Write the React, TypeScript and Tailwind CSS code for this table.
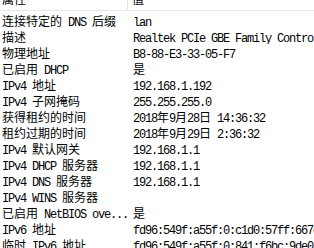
import React from "react";

const rows: [string, string][] = [
  ["连接特定的 DNS 后缀", "lan"],
  ["描述", "Realtek PCIe GBE Family Controller"],
  ["物理地址", "B8-88-E3-33-05-F7"],
  ["已启用 DHCP", "是"],
  ["IPv4 地址", "192.168.1.192"],
  ["IPv4 子网掩码", "255.255.255.0"],
  ["获得租约的时间", "2018年9月28日 14:36:32"],
  ["租约过期的时间", "2018年9月29日 2:36:32"],
  ["IPv4 默认网关", "192.168.1.1"],
  ["IPv4 DHCP 服务器", "192.168.1.1"],
  ["IPv4 DNS 服务器", "192.168.1.1"],
  ["IPv4 WINS 服务器", ""],
  ["已启用 NetBIOS ove...", "是"],
  ["IPv6 地址", "fd96:549f:a55f:0:c1d0:57ff:667c:4a12"],
  ["临时 IPv6 地址", "fd96:549f:a55f:0:841:f6bc:9de0:1b7a"],
];

function Mixed({ text }: { text: string }) {
  const parts = text.split(/([\x00-\x7f]+)/).filter((p) => p.length > 0);
  return (
    <>
      {parts.map((p, i) =>
        /^[\x00-\x7f]+$/.test(p) ? (
          <span
            key={i}
            className="font-['Liberation_Mono',monospace] text-[12px] tracking-[-1.2px] whitespace-pre"
          >
            {p}
          </span>
        ) : (
          <span
            key={i}
            className="font-['Noto_Sans_CJK_SC',sans-serif] text-[12px] whitespace-pre"
          >
            {p}
          </span>
        )
      )}
    </>
  );
}

export default function App() {
  return (
    <div className="w-[314px] h-[248px] overflow-hidden bg-white text-black">
      <div className="-mt-[12px] h-[23px] flex border-b border-[#e5e5e5] bg-white">
        <div className="w-[128px] shrink-0 flex items-center pl-[2px] border-r border-[#e5e5e5] leading-4">
          <Mixed text="属性" />
        </div>
        <div className="flex-1 flex items-center pl-[4px] leading-4">
          <Mixed text="值" />
        </div>
      </div>
      <div className="flex flex-col pt-[1px]">
        {rows.map(([k, v], i) => (
          <div key={i} className="h-4 flex leading-4">
            <div className="w-[133px] shrink-0 pl-[2px] whitespace-nowrap overflow-hidden">
              <Mixed text={k} />
            </div>
            <div className="flex-1 whitespace-nowrap overflow-hidden">
              <Mixed text={v} />
            </div>
          </div>
        ))}
      </div>
    </div>
  );
}
